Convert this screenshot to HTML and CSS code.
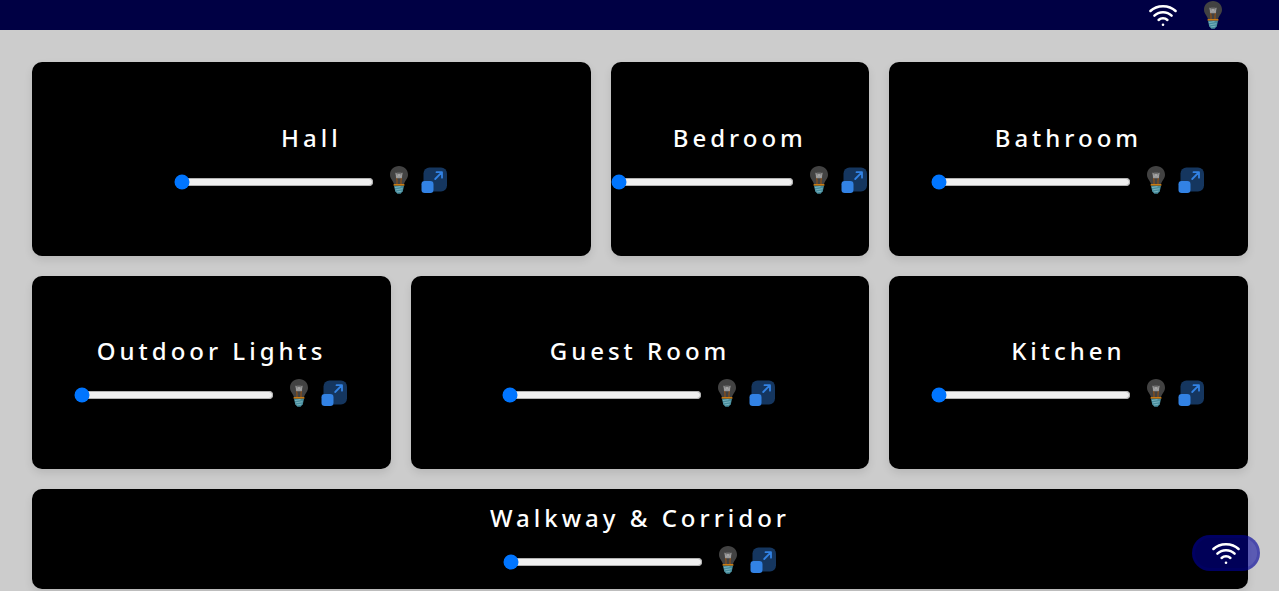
FILE: index.html
```html
<!DOCTYPE html>
<html lang="en">
<head>
<meta charset="utf-8">
<meta name="viewport" content="width=device-width, initial-scale=1">
<title>Home Lights</title>
<link rel="stylesheet" href="styles.css">
</head>
<body>
<svg class="sprite" aria-hidden="true">
  <symbol id="wifi" viewBox="0 0 30 30">
    <g fill="none" stroke="#fff" stroke-width="2.5" stroke-linecap="round">
      <path d="M2.400 11C9 4.500 21 4.500 27.600 11"/>
      <path d="M6.400 15.600C11 11 19 11 23.600 15.600"/>
      <path d="M10.600 20C13 17.700 17 17.700 19.400 20"/>
    </g>
    <circle cx="15" cy="24.800" r="1.300" fill="#fff"/>
  </symbol>
  <symbol id="bulb" viewBox="0 0 30 30">
    <path d="M15 1C9.800 1 6 4.800 6 9.800C6 14 9.500 15.700 10.200 20H19.800C20.500 15.700 24 14 24 9.800C24 4.800 20.200 1 15 1Z" fill="#424242"/>
    <path d="M13 19.500V15.500L12.600 13M17 19.500V15.500L17.400 13" fill="none" stroke="#945216" stroke-width="1.100"/>
    <rect x="11.800" y="7.500" width="6.400" height="6" rx="1.500" fill="#8b8b8b" fill-opacity=".6"/>
    <path d="M11.800 7.800L13 13L14.200 9L15 13L15.800 9L17 13L18.200 7.800" fill="none" stroke="#b0b0b0" stroke-width=".8"/>
    <path d="M9.600 19.100H20.400V20.700H9.600Z" fill="#d9820f"/>
    <path d="M10 20.700H20L18.800 26.300L16.600 28.800H13.400L11.200 26.300Z" fill="#468c9c"/>
    <path d="M10.800 22.600L16.500 21.600M11.400 24.900L18.500 23.700M12.600 27L17.500 26.200" stroke="#86bcc7" stroke-width=".8"/>
  </symbol>
  <symbol id="expand" viewBox="0 0 30 30">
    <rect x="4.500" y="2.500" width="23.500" height="24" rx="6" fill="#15365f"/>
    <rect x="2.500" y="16" width="12" height="12" rx="3.200" fill="#3282e4"/>
    <path d="M16.200 14L22.800 7.400M17.500 7.200H23V12.700" fill="none" stroke="#3282e4" stroke-width="1.800" stroke-linecap="round" stroke-linejoin="round"/>
  </symbol>
</svg>
<header class="topbar">
  <button class="icon-btn" aria-label="Connection"><svg class="icon"><use href="#wifi"/></svg></button>
  <button class="icon-btn" aria-label="All lights"><svg class="icon"><use href="#bulb"/></svg></button>
</header>
<main class="rooms">
  <section class="card card-wide">
    <h2 class="room" id="hall">Hall</h2>
    <div class="controls">
      <input class="dimmer" type="range" value="0" aria-labelledby="hall">
      <button class="icon-btn" aria-label="Toggle Hall"><svg class="icon"><use href="#bulb"/></svg></button>
      <button class="icon-btn" aria-label="Expand Hall"><svg class="icon"><use href="#expand"/></svg></button>
    </div>
  </section>
  <section class="card">
    <h2 class="room" id="bedroom">Bedroom</h2>
    <div class="controls">
      <input class="dimmer" type="range" value="0" aria-labelledby="bedroom">
      <button class="icon-btn" aria-label="Toggle Bedroom"><svg class="icon"><use href="#bulb"/></svg></button>
      <button class="icon-btn" aria-label="Expand Bedroom"><svg class="icon"><use href="#expand"/></svg></button>
    </div>
  </section>
  <section class="card">
    <h2 class="room" id="bathroom">Bathroom</h2>
    <div class="controls">
      <input class="dimmer" type="range" value="0" aria-labelledby="bathroom">
      <button class="icon-btn" aria-label="Toggle Bathroom"><svg class="icon"><use href="#bulb"/></svg></button>
      <button class="icon-btn" aria-label="Expand Bathroom"><svg class="icon"><use href="#expand"/></svg></button>
    </div>
  </section>
  <section class="card">
    <h2 class="room" id="outdoor">Outdoor Lights</h2>
    <div class="controls">
      <input class="dimmer" type="range" value="0" aria-labelledby="outdoor">
      <button class="icon-btn" aria-label="Toggle Outdoor Lights"><svg class="icon"><use href="#bulb"/></svg></button>
      <button class="icon-btn" aria-label="Expand Outdoor Lights"><svg class="icon"><use href="#expand"/></svg></button>
    </div>
  </section>
  <section class="card card-wide">
    <h2 class="room" id="guest">Guest Room</h2>
    <div class="controls">
      <input class="dimmer" type="range" value="0" aria-labelledby="guest">
      <button class="icon-btn" aria-label="Toggle Guest Room"><svg class="icon"><use href="#bulb"/></svg></button>
      <button class="icon-btn" aria-label="Expand Guest Room"><svg class="icon"><use href="#expand"/></svg></button>
    </div>
  </section>
  <section class="card">
    <h2 class="room" id="kitchen">Kitchen</h2>
    <div class="controls">
      <input class="dimmer" type="range" value="0" aria-labelledby="kitchen">
      <button class="icon-btn" aria-label="Toggle Kitchen"><svg class="icon"><use href="#bulb"/></svg></button>
      <button class="icon-btn" aria-label="Expand Kitchen"><svg class="icon"><use href="#expand"/></svg></button>
    </div>
  </section>
  <section class="card card-full">
    <h2 class="room" id="walkway">Walkway &amp; Corridor</h2>
    <div class="controls">
      <input class="dimmer" type="range" value="0" aria-labelledby="walkway">
      <button class="icon-btn" aria-label="Toggle Walkway &amp; Corridor"><svg class="icon"><use href="#bulb"/></svg></button>
      <button class="icon-btn" aria-label="Expand Walkway &amp; Corridor"><svg class="icon"><use href="#expand"/></svg></button>
    </div>
  </section>
</main>
<button class="fab" aria-label="Wi-Fi settings"><svg class="icon"><use href="#wifi"/></svg></button>
</body>
</html>
```
FILE: styles.css
```css
* { box-sizing: border-box; }

body {
  display: flex;
  flex-direction: column;
  min-height: 100vh;
  margin: 0;
  background: #ccc;
  font-family: "Noto Sans", sans-serif;
}

.sprite { position: absolute; width: 0; height: 0; }

.topbar {
  display: flex;
  justify-content: flex-end;
  gap: 20px;
  padding: 0 4%;
  background: #000044;
}

.rooms {
  flex: 1;
  display: grid;
  grid-template-columns: 2fr 1fr minmax(258px, 1fr) 2fr;
  grid-template-rows: 1fr 1fr auto;
  gap: 20px;
  padding: 32px 31px 2px 32px;
}

.card {
  display: flex;
  flex-direction: column;
  align-items: center;
  justify-content: center;
  gap: 10px;
  min-width: 0;
  padding-bottom: 2px;
  border-radius: 10px;
  background: #000;
  box-shadow: 0 4px 8px rgba(0, 0, 0, 0.1);
}

.card-wide { grid-column: span 2; }
.card-full { grid-column: 1 / -1; padding: 12px 0 14px; }

.room {
  margin: 0;
  color: #fff;
  font-size: 24px;
  font-weight: 500;
  line-height: 34px;
  letter-spacing: 4px;
}

.controls {
  display: flex;
  justify-content: center;
  gap: 5px;
  max-width: 100%;
}

.dimmer {
  flex: 0 1 200px;
  width: 200px;
  min-width: 0;
  height: 16px;
  margin: 9px 5px 0 0;
}

.icon-btn {
  flex: none;
  width: 30px;
  height: 30px;
  padding: 0;
  border: 0;
  background: none;
  cursor: pointer;
}

.icon { display: block; width: 30px; height: 30px; }

.fab {
  position: fixed;
  right: 19px;
  bottom: 20px;
  padding: 0 16px;
  border: 3px solid rgba(0, 0, 139, 0.2);
  border-radius: 18px;
  background: rgba(0, 0, 160, 0.55);
  cursor: pointer;
}
```
